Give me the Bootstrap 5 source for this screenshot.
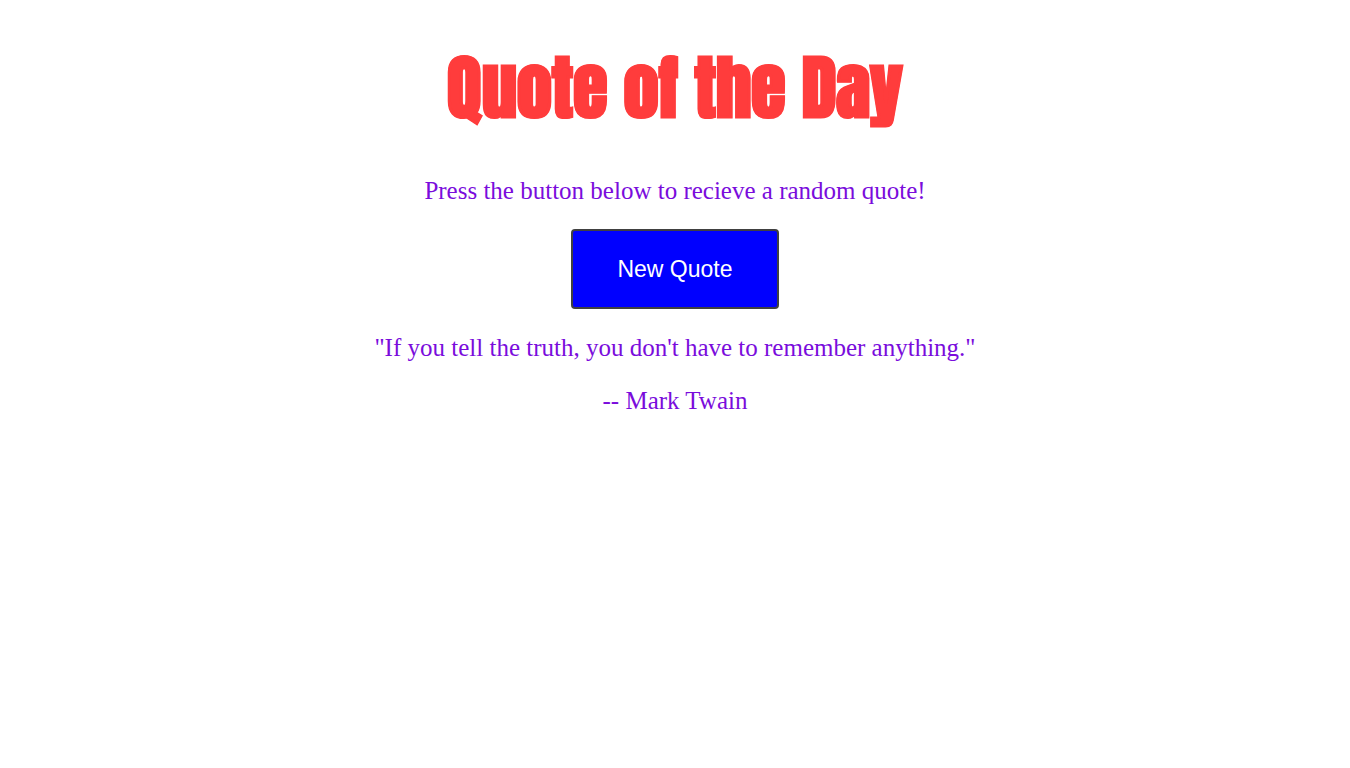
<!DOCTYPE html>
<html lang="en">
<head>
<meta charset="utf-8">
<meta name="viewport" content="width=device-width, initial-scale=1">
<title>Quote of the Day</title>
<link href="https://cdn.jsdelivr.net/npm/bootstrap@5.3.0/dist/css/bootstrap.min.css" rel="stylesheet">
<style>
  body {
    font-family: "Liberation Serif", "Times New Roman", serif;
    font-size: 25px;
    line-height: 29px;
    color: #7a0cdc;
  }
  h1 {
    font-family: Impact, Anton, "Roboto Condensed", sans-serif;
    font-size: 70px;
    line-height: 80px;
    font-weight: 700;
    color: #ff3c3c;
    -webkit-text-stroke: 1px #ff3c3c;
  }
  p { margin-bottom: 24px; }
  .quote-btn {
    padding: 25px 44px;
    font-family: "Liberation Sans", Arial, sans-serif;
    font-size: 23px;
    line-height: 26px;
    color: #fff;
    background-color: #00f;
    border: 2px solid #404040;
    border-radius: 4px;
  }
  .quote-btn:hover, .quote-btn:active { background-color: #00c; color: #fff; }
</style>
</head>
<body class="bg-white">
<main class="container text-center pt-5">
  <h1 class="mb-5">Quote of the Day</h1>
  <p>Press the button below to recieve a random quote!</p>
  <button type="button" class="btn quote-btn mb-4">New Quote</button>
  <p>"If you tell the truth, you don't have to remember anything."</p>
  <p>-- Mark Twain</p>
</main>
<script src="https://cdn.jsdelivr.net/npm/bootstrap@5.3.0/dist/js/bootstrap.bundle.min.js"></script>
</body>
</html>
